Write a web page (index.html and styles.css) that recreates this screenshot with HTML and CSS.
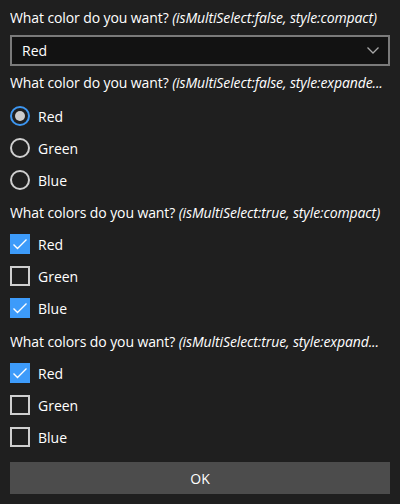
FILE: index.html
```html
<!DOCTYPE html>
<html>
<head>
<meta charset="utf-8">
<link rel="stylesheet" href="styles.css">
</head>
<body>
<div class="card">
  <div class="label">What color do you want? <i>(isMultiSelect:false, style:compact)</i></div>
  <div class="select">
    <span>Red</span>
    <svg class="chev" width="12" height="7" viewBox="0 0 12 7"><path d="M0.5 0.5 L6 6 L11.5 0.5" fill="none" stroke="#a8a8a8" stroke-width="1.3"/></svg>
  </div>

  <div class="label">What color do you want? <i>(isMultiSelect:false, style:expande...</i></div>
  <div class="list radios">
    <div class="opt"><span class="radio on"></span>Red</div>
    <div class="opt"><span class="radio"></span>Green</div>
    <div class="opt"><span class="radio"></span>Blue</div>
  </div>

  <div class="label after-radios">What colors do you want? <i>(isMultiSelect:true, style:compact)</i></div>
  <div class="list">
    <div class="opt"><span class="check on"><svg width="20" height="20" viewBox="0 0 20 20"><path d="M3.5 10.5 L7.5 14.5 L16.5 5.5" fill="none" stroke="#fff" stroke-width="1.4"/></svg></span>Red</div>
    <div class="opt"><span class="check"></span>Green</div>
    <div class="opt"><span class="check on"><svg width="20" height="20" viewBox="0 0 20 20"><path d="M3.5 10.5 L7.5 14.5 L16.5 5.5" fill="none" stroke="#fff" stroke-width="1.4"/></svg></span>Blue</div>
  </div>

  <div class="label after-checks">What colors do you want? <i>(isMultiSelect:true, style:expand...</i></div>
  <div class="list">
    <div class="opt"><span class="check on"><svg width="20" height="20" viewBox="0 0 20 20"><path d="M3.5 10.5 L7.5 14.5 L16.5 5.5" fill="none" stroke="#fff" stroke-width="1.4"/></svg></span>Red</div>
    <div class="opt"><span class="check"></span>Green</div>
    <div class="opt"><span class="check"></span>Blue</div>
  </div>

  <div class="btn">OK</div>
</div>
</body>
</html>
```
FILE: styles.css
```css
html, body {
  margin: 0;
  padding: 0;
  background: #1f1f1f;
}
body {
  width: 400px;
  height: 504px;
  overflow: hidden;
  font-family: "Open Sans", "Noto Sans", sans-serif;
  font-size: 14px;
  color: #ffffff;
}
.card {
  padding: 8px 10px 0 10px;
  display: flex;
  flex-direction: column;
}
.label {
  height: 20px;
  line-height: 20px;
  white-space: nowrap;
  overflow: hidden;
  letter-spacing: -0.1px;
}
.label i {
  font-style: italic;
}
.label.after-radios {
  margin-top: 7px;
}
.label.after-checks {
  margin-top: 8px;
}
.select {
  margin-top: 7px;
  margin-bottom: 7px;
  height: 31px;
  box-sizing: border-box;
  border: 2px solid #7a7a7a;
  background: #121212;
  display: flex;
  align-items: center;
  justify-content: space-between;
  padding: 0 9px 0 10px;
}
.list {
  display: flex;
  flex-direction: column;
  margin-top: 5px;
}
.list.radios {
  margin-top: 7px;
}
.opt {
  height: 32px;
  display: flex;
  align-items: center;
}
.radio, .check {
  width: 20px;
  height: 20px;
  box-sizing: border-box;
  margin-right: 8px;
  flex: none;
}
.radio {
  border-radius: 50%;
  border: 2px solid #cfcfcf;
  position: relative;
}
.radio.on {
  border-color: #3d96f0;
}
.radio.on::after {
  content: "";
  position: absolute;
  left: 3px;
  top: 3px;
  width: 10px;
  height: 10px;
  border-radius: 50%;
  background: #cccccc;
}
.check {
  border: 2px solid #cfcfcf;
}
.check.on {
  border: none;
  background: #3d9bfa;
}
.check svg {
  display: block;
}
.btn {
  margin-top: 9px;
  height: 32px;
  background: #4c4c4c;
  display: flex;
  align-items: center;
  justify-content: center;
}
```
